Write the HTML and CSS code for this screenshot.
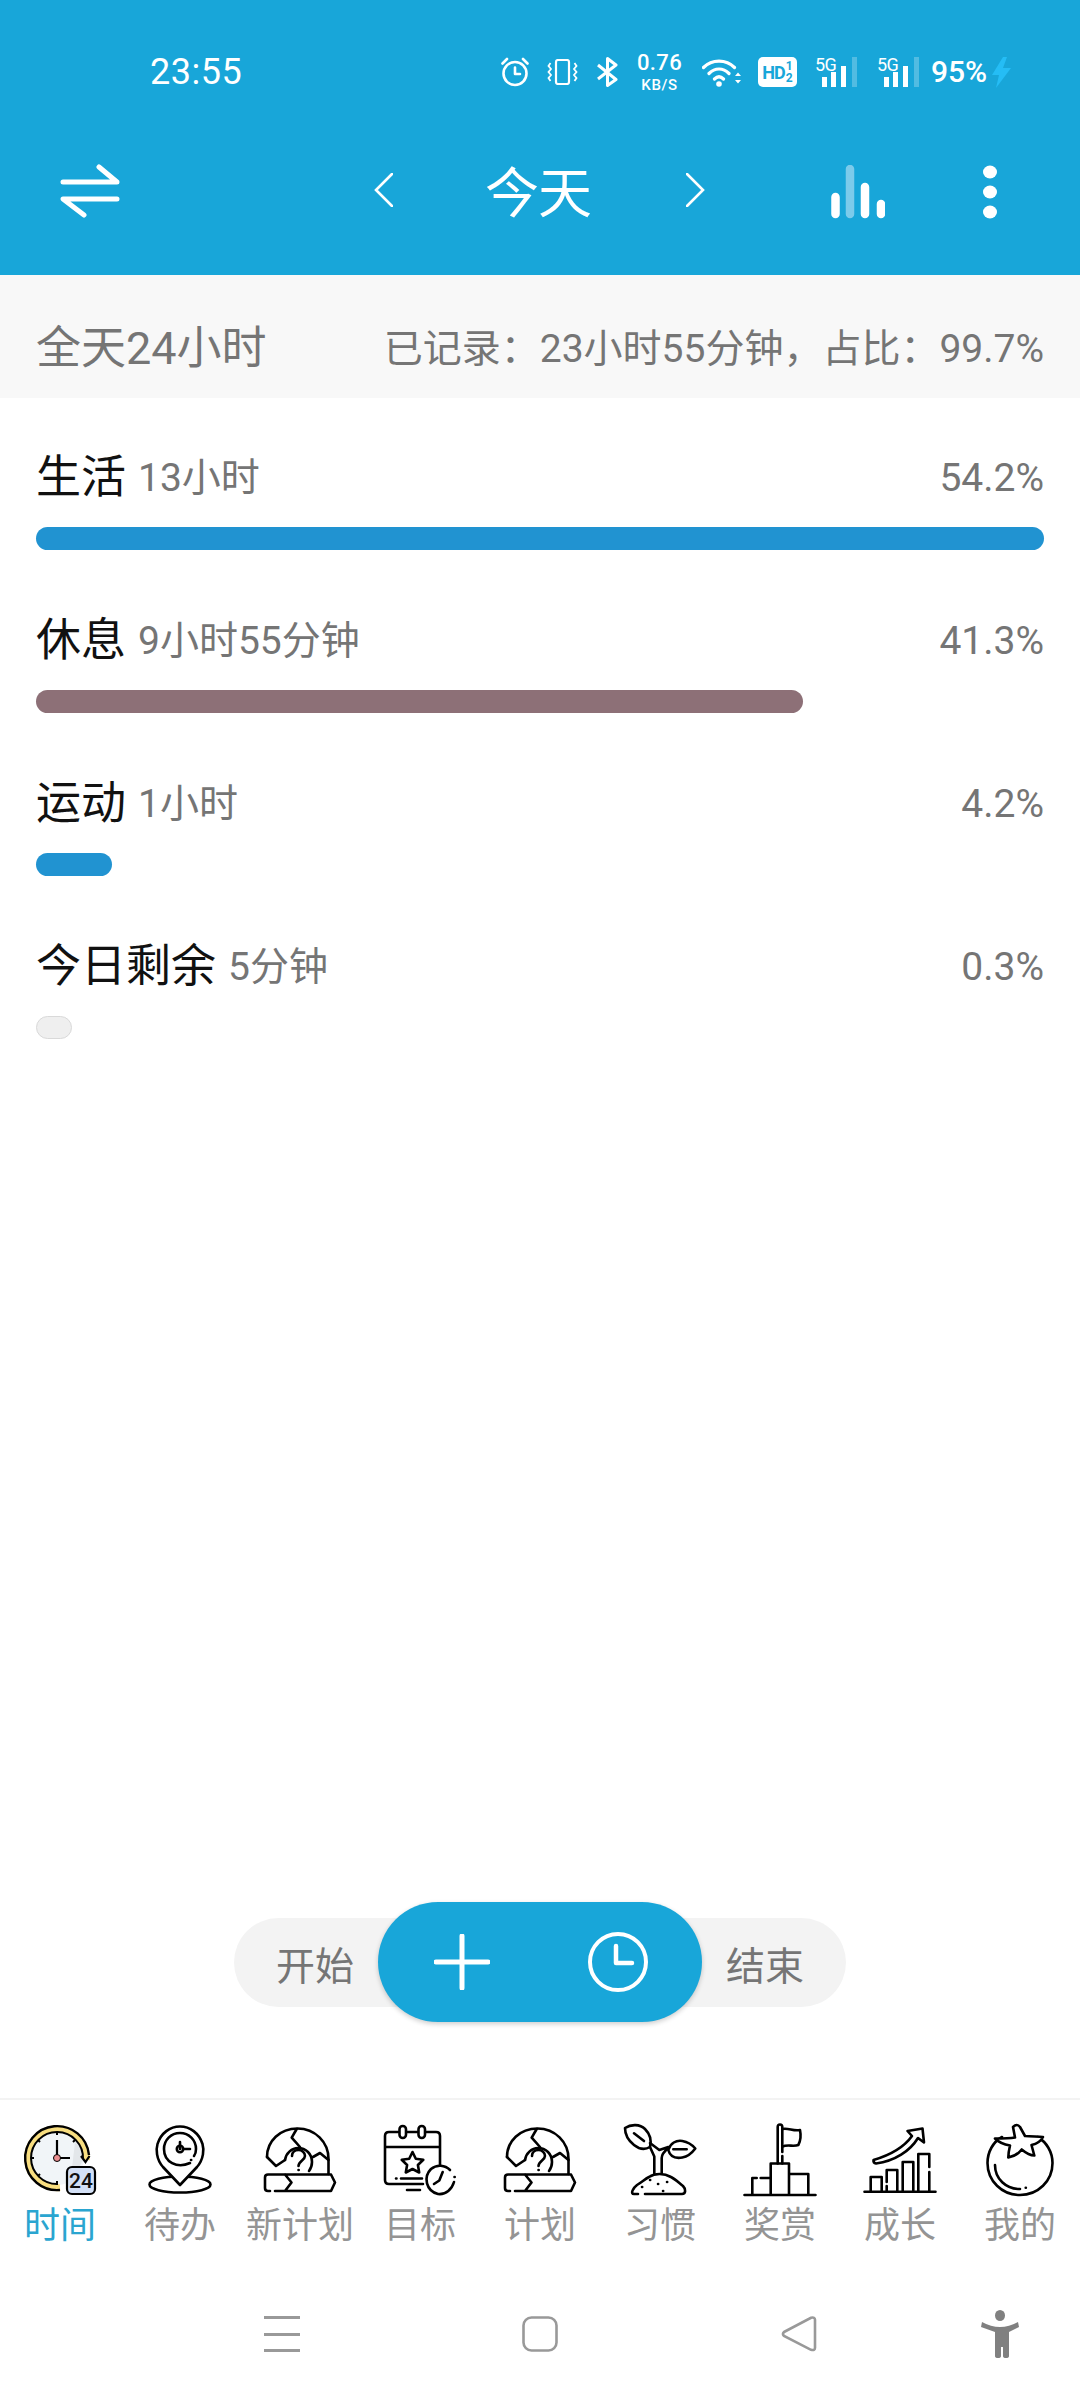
FILE: index.html
```html
<!DOCTYPE html>
<html lang="zh">
<head>
<meta charset="utf-8">
<title>今天</title>
<link rel="stylesheet" href="styles.css">
</head>
<body>
<div class="app">
  <div class="top">
    <div class="status">
      <span class="time">23:55</span>
      <div class="sicons">
        <svg class="i-alarm" viewBox="0 0 28 30" width="28" height="30"><circle cx="14" cy="16.500" r="11.500" fill="none" stroke="#fff" stroke-width="2.600"/><path d="M14 10.500v6.500h5M1.500 6.500L6 2M26.500 6.500L22 2" fill="none" stroke="#fff" stroke-width="2.600" stroke-linecap="round" stroke-linejoin="round"/></svg>
        <svg class="i-vib" viewBox="0 0 31 26" width="31" height="26"><rect x="9" y="1" width="13" height="24" rx="2" fill="none" stroke="#fff" stroke-width="2.200"/><path d="M3.500 4l-2 3 2.500 3-2.500 3 2.500 3-2.500 3 2 3M27.500 4l2 3-2.500 3 2.500 3-2.500 3 2.500 3-2 3" fill="none" stroke="#fff" stroke-width="1.800"/></svg>
        <svg class="i-bt" viewBox="0 0 23 30" width="23" height="30"><path d="M2 8l18 14.500-8.500 6V1.500L20 8 2 22" fill="none" stroke="#fff" stroke-width="3" stroke-linejoin="round"/></svg>
        <div class="speed"><span class="speed-a">0.76</span><span class="speed-b">KB/S</span></div>
        <svg class="i-wifi" viewBox="0 0 40 29" width="40" height="29"><path d="M1.500 9.500C10 1 24 1 32.500 9.500M7 15.500c6-6 14-6 20 0M12.500 21c3-3 6-3 9 0" fill="none" stroke="#fff" stroke-width="3.200" stroke-linecap="round"/><circle cx="17" cy="26" r="2.800" fill="#fff"/><path d="M33 18l3-3.500 3 3.500zM33 22l3 3.500 3-3.500z" fill="#fff"/></svg>
        <div class="hd"><span class="hd-t">HD</span><span class="hd-n"><span>1</span><span>2</span></span></div>
        <div class="sig"><span class="sig-t">5G</span><svg viewBox="0 0 37 30" width="37" height="30"><rect x="0" y="20" width="5" height="10" fill="#fff"/><rect x="9" y="15" width="5" height="15" fill="#fff"/><rect x="19" y="9" width="5" height="21" fill="#fff"/><rect x="30" y="0" width="5" height="30" fill="#fff" opacity=".25"/></svg></div>
        <div class="sig"><span class="sig-t">5G</span><svg viewBox="0 0 37 30" width="37" height="30"><rect x="0" y="20" width="5" height="10" fill="#fff"/><rect x="9" y="15" width="5" height="15" fill="#fff"/><rect x="19" y="9" width="5" height="21" fill="#fff"/><rect x="30" y="0" width="5" height="30" fill="#fff" opacity=".25"/></svg></div>
        <span class="batt">95%</span>
        <svg class="i-bolt" viewBox="0 0 19 31" width="19" height="31"><path d="M11 0L0 18h7l-3 13L19 11h-8l4-11z" fill="#25bdf5"/></svg>
      </div>
    </div>
    <div class="bar">
      <svg class="i-swap" viewBox="0 0 60 54" width="60" height="54"><path d="M3 18h54L39 3M57 35H3l21 16" fill="none" stroke="#fff" stroke-width="5" stroke-linecap="round" stroke-linejoin="round"/></svg>
      <div class="nav-date">
        <svg viewBox="0 0 19 34" width="19" height="34"><path d="M18 1L2 17l16 16" fill="none" stroke="#fff" stroke-width="2.600" stroke-linecap="round"/></svg>
        <span class="today">今天</span>
        <svg viewBox="0 0 19 34" width="19" height="34"><path d="M1 1l16 16L1 33" fill="none" stroke="#fff" stroke-width="2.600" stroke-linecap="round"/></svg>
      </div>
      <svg class="i-chart" viewBox="0 0 54 54" width="54" height="54"><g stroke-width="8.500" stroke-linecap="round"><path d="M4.500 32v17M34 22v27M50 39v10" stroke="#fff"/><path d="M19 4v45" stroke="#7ccbeb"/></g></svg>
      <svg class="i-more" viewBox="0 0 14 54" width="14" height="54"><g fill="#fff"><ellipse cx="7" cy="7" rx="7" ry="6.500"/><ellipse cx="7" cy="27" rx="7" ry="6.500"/><ellipse cx="7" cy="47" rx="7" ry="6.500"/></g></svg>
    </div>
  </div>

  <div class="band">
    <span class="band-l">全天24小时</span>
    <span class="band-r">已记录：23小时55分钟，占比：99.7%</span>
  </div>

  <div class="rows">
    <div class="row">
      <div class="row-h"><span class="name">生活</span><span class="dur">13小时</span><span class="pct">54.2%</span></div>
      <div class="fill blue w-full"></div>
    </div>
    <div class="row">
      <div class="row-h"><span class="name">休息</span><span class="dur">9小时55分钟</span><span class="pct">41.3%</span></div>
      <div class="fill mauve w-rest"></div>
    </div>
    <div class="row">
      <div class="row-h"><span class="name">运动</span><span class="dur">1小时</span><span class="pct">4.2%</span></div>
      <div class="fill blue w-sport"></div>
    </div>
    <div class="row">
      <div class="row-h"><span class="name">今日剩余</span><span class="dur">5分钟</span><span class="pct">0.3%</span></div>
      <div class="fill grey w-left"></div>
    </div>
  </div>

  <div class="fab-wrap">
    <div class="fab-track">
      <span class="fab-txt fab-a">开始</span>
      <div class="fab">
        <svg viewBox="0 0 56 56" width="56" height="56"><path d="M28 2v52M2 28h52" fill="none" stroke="#fff" stroke-width="5" stroke-linecap="round"/></svg>
        <svg viewBox="0 0 60 60" width="60" height="60"><circle cx="30" cy="30" r="28" fill="none" stroke="#fff" stroke-width="4"/><path d="M28 14v17h16" fill="none" stroke="#fff" stroke-width="4.500" stroke-linecap="round" stroke-linejoin="round"/></svg>
      </div>
      <span class="fab-txt fab-b">结束</span>
    </div>
  </div>

  <nav class="tabs">
    <div class="tab on">
      <svg viewBox="0 0 80 76" width="80" height="76">
        <circle cx="37" cy="36" r="27" fill="#f1f5f8"/>
        <path d="M55 20a27 27 0 0 1 9 16l-6 12-6-2z" fill="#e3e7ea"/>
        <path d="M66.500 38A29.500 29.500 0 1 0 40 65.500" fill="none" stroke="#f8de80" stroke-width="7"/>
        <path d="M69 33A32 32 0 1 0 40 68" fill="none" stroke="#000" stroke-width="2.400"/>
        <path d="M63 37A26 26 0 1 0 38 62" fill="none" stroke="#000" stroke-width="2"/>
        <path d="M37 10v3M37 59v3M11 36h3M18 18l2 2M18 54l2-2M55 18l-2 2" stroke="#000" stroke-width="2"/>
        <path d="M37 18v18h13" fill="none" stroke="#000" stroke-width="2.200"/>
        <circle cx="37" cy="36" r="3.500" fill="#ea8d8f" stroke="#000" stroke-width="1"/>
        <path d="M61 34l4.500 6 4-6" fill="none" stroke="#000" stroke-width="2.200"/>
        <rect x="47" y="45" width="28" height="27" rx="5" fill="#d3e0f6" stroke="#000" stroke-width="2.200"/>
        <text x="61" y="65.500" class="badge-t">24</text>
      </svg>
      <span>时间</span>
    </div>
    <div class="tab">
      <svg viewBox="0 0 80 76" width="80" height="76" class="line">
        <ellipse cx="40" cy="62.500" rx="30.500" ry="8"/>
        <path d="M40 63L23 45C16 37 16 27 17.500 22 21 11 30 4.500 40 4.500S59 11 62.500 22C64 27 64 37 57 45z" fill="#fff"/>
        <path d="M50 41C37 47 24 40 24 27 24 18 31 11 40 11c9 0 16 7 16 16 0 3-.5 5-2 7"/>
        <path d="M51 38h.2"/>
        <path d="M40 20v7M43 27h7"/>
        <circle cx="40" cy="27" r="3.200"/>
      </svg>
      <span>待办</span>
    </div>
    <div class="tab">
      <svg viewBox="0 0 80 76" width="80" height="76" class="line">
        <use href="#globe"/>
      </svg>
      <span>新计划</span>
    </div>
    <div class="tab">
      <svg viewBox="0 0 80 76" width="80" height="76" class="line">
        <path d="M60 43V14q0-4-4-4H9q-4 0-4 4v44q0 4 4 4h34M5 25h55M27 68h13M16 56.500h.5M21 56.500h21"/>
        <rect x="19.500" y="4" width="6.500" height="12" rx="3.200" fill="#fff"/>
        <rect x="38.500" y="4" width="6.500" height="12" rx="3.200" fill="#fff"/>
        <path d="M32.500 30l3.300 6.800 7.500 1-5.400 5.200 1.300 7.500-6.700-3.500-6.700 3.500 1.300-7.500-5.400-5.200 7.500-1z"/>
        <path d="M70 48C65 43 57 42 51 47 43 55 46 69 58 72 66 73 72 67 74 60"/>
        <path d="M74.500 55h.2"/>
        <path d="M62.700 50l-3.400 8.500-5.300 3.500"/>
      </svg>
      <span>目标</span>
    </div>
    <div class="tab">
      <svg viewBox="0 0 80 76" width="80" height="76" class="line">
        <use href="#globe"/>
      </svg>
      <span>计划</span>
    </div>
    <div class="tab">
      <svg viewBox="0 0 80 76" width="80" height="76" class="line">
        <path d="M5 6C11 2 20 2 25 7c4 4 7 10 5 18-5 3-11 2-16-2C9 19 5 13 5 6zM14 11.300l10 7.700"/>
        <path d="M48.300 28c2-7 8-10 14-9 6 1 10 4 13 7.500-3 4-7 8-13 9-6 1-12 0-14-7.500zM53.300 27.300h13.400"/>
        <path d="M30 25l4.300 9.500v17M41.700 51.500V36c0-3 3-7 6.600-10M30 21l9.300 7 9-3"/>
        <path d="M25 72H62c4 0 4-5 1-8-5-4-8-7-12-9-7-4-16-4-22 0-4 2-7 5-12 8-4 3-7 9-3 9h4"/>
        <path d="M30 58h.2M38 62h.2M22 65h.2M43 69h.2M47 60h.2"/>
      </svg>
      <span>习惯</span>
    </div>
    <div class="tab">
      <svg viewBox="0 0 80 76" width="80" height="76" class="line">
        <path d="M4.500 73h71M30.700 73V41.500H49V73M49 52h19.300v21M12.300 73V56h4.400M20.700 56h10"/>
        <path d="M37.700 41.500V5q0-2.500 2.300-2.500T42.300 5v25M42.300 34v7.500"/>
        <path d="M42.300 7c6-1.500 11 2.500 17.700 1 1 5 .5 11-1.700 15-5 2-11-1-16 1.700"/>
      </svg>
      <span>奖赏</span>
    </div>
    <div class="tab">
      <svg viewBox="0 0 80 76" width="80" height="76" class="line">
        <path d="M4.500 69.700h71M10.700 69.700V55h11v14.700M26.700 60V48h10.600v21.700M26.700 64v5.700M42.700 69.700V40h10.600v29.700M58.300 69.700V32h11v13M69.300 50v19.700"/>
        <path d="M13.500 38C27 34 42 28 52 14L47.500 9 62.500 6.500 64 20.500 58 16C50 29 35 39 16 41.500Q13 41 13.500 38z"/>
      </svg>
      <span>成长</span>
    </div>
    <div class="tab">
      <svg viewBox="0 0 80 76" width="80" height="76" class="line">
        <path d="M22 15C13 20 7.500 30 7.500 41c0 18 14.500 32 32.500 32s32.500-14 32.500-32c0-11-6-21-15-26"/>
        <path d="M15 43c0 14 11 24 25 24M45.700 65.700h.2"/>
        <path d="M33 5q4-4 7 0l5 9c6 0 13 1 18 1-2 4-7 7-11.500 8l2.800 10.500c-5 0-9-3-12.600-6-3 4-8 7-13.400 8 0-5 1-9 1.700-12-6-1-12-4-15-7 6 0 14 0 20-1z" fill="#fff"/>
      </svg>
      <span>我的</span>
    </div>
  </nav>

  <div class="sysnav">
    <div class="burger"><i></i><i></i><i></i></div>
    <svg class="sys-home" viewBox="0 0 37 36" width="37" height="36"><rect x="1.500" y="1.500" width="33" height="33" rx="8" fill="none" stroke="#999" stroke-width="2.600"/></svg>
    <svg class="sys-back" viewBox="0 0 37 36" width="37" height="36"><path d="M3 16L30 1.800q4-1 4 2v28q0 3-4 2L3 20q-2-2 0-4z" fill="none" stroke="#999" stroke-width="2.600"/></svg>
    <svg class="sys-person" viewBox="0 0 38 48" width="38" height="48"><ellipse cx="19" cy="5.500" rx="5" ry="5.500" fill="#808080"/><path d="M1 12q9 5 18 5t18-5l1 5-10 5v24q0 2-3 2t-3-2V37h-2v9q0 2-3 2t-3-2V22L0 17z" fill="#808080"/></svg>
  </div>
</div>

<svg class="defs" width="0" height="0" aria-hidden="true">
  <symbol id="globe" viewBox="0 0 80 76">
    <path d="M7 35C7 19 20 6.500 37.500 6.500S68.500 20 68.500 37V52"/>
    <path d="M7 35l9 9 9-6M36.700 7l-5 8.700L40 25"/>
    <path d="M25 38C26 31 32 26 38 26c8 0 14 6 14 14 0 4-1.500 7-3 9"/>
    <path d="M53 35l7-4 8.500 7"/>
    <path d="M32 34c0-4 3-6 6.500-6s6.500 2.500 6.500 6c0 4-6.500 5-6.500 10M38.500 48h.2"/>
    <path d="M71 52.500H8q-3 0-3 3V66q0 3 3 3h2M15 69H71L75 60.500 71 52.500M25 52.500L31.500 60.500 25 69"/>
  </symbol>
</svg>
</body>
</html>
```

FILE: styles.css
```css
* { box-sizing: border-box; margin: 0; padding: 0; }
html, body { width: 1080px; height: 2400px; background: #fff; overflow: hidden; }
body { font-family: "Roboto", "Noto Sans CJK SC", sans-serif; color: #757575; }
.app { width: 1080px; height: 2400px; display: flex; flex-direction: column; }
.defs { display: block; }

.top { height: 275px; background: #18a6d9; color: #fff; flex: none; }
.status { height: 90px; padding: 50px 69px 0 150px; display: flex; justify-content: space-between; align-items: flex-start; }
.time { font-size: 36px; line-height: 44px; letter-spacing: .5px; }
.sicons { display: flex; align-items: center; height: 44px; }
.i-vib { margin-left: 18px; }
.i-bt { margin-left: 18px; }
.speed { margin-left: 18px; width: 45px; display: flex; flex-direction: column; align-items: center; font-weight: 500; white-space: nowrap; }
.speed-a { font-size: 22px; line-height: 26px; letter-spacing: .4px; }
.speed-b { font-size: 15px; line-height: 18px; letter-spacing: .6px; }
.i-wifi { margin-left: 20px; }
.hd { margin-left: 16px; width: 39px; height: 30px; background: #fff; border-radius: 5px; display: flex; align-items: center; justify-content: center; color: #18a6d9; font-weight: 700; }
.hd-t { font-size: 18px; letter-spacing: -1px; }
.hd-n { display: flex; flex-direction: column; font-size: 12px; line-height: 12px; margin-left: 1px; }
.sig { position: relative; width: 44px; height: 30px; margin-left: 18px; display: flex; justify-content: flex-end; align-items: flex-end; }
.sig-t { position: absolute; left: 0; top: -1px; font-size: 18px; line-height: 18px; letter-spacing: -.5px; }
.batt { font-size: 30px; line-height: 30px; margin-left: 10px; font-weight: 500; width: 55px; white-space: nowrap; }
.i-bolt { margin-left: 6px; }

.bar { height: 185px; padding: 0 0 0 60px; display: flex; align-items: flex-start; }
.i-swap { margin-top: 74px; }
.nav-date { display: flex; align-items: center; margin: 73px 0 0 254px; height: 54px; }
.nav-date .today { font-size: 54px; line-height: 54px; width: 103px; margin: 0 95px; text-align: center; letter-spacing: -1px; text-indent: -3px; font-family: "Noto Sans CJK SC", sans-serif; font-weight: 400; white-space: nowrap; }
.i-chart { margin: 75px 0 0 126px; }
.i-more { margin: 75px 0 0 98px; }

.band { height: 123px; flex: none; background: #f8f8f8; padding: 24px 36px 0; display: flex; justify-content: space-between; align-items: center; }
.band-l { font-size: 45px; line-height: 56px; }
.band-r { font-size: 39px; line-height: 56px; }

.rows { flex: none; display: flex; flex-direction: column; }
.row { height: 163px; padding: 52px 36px 0; }
.row-h { display: flex; align-items: center; height: 56px; line-height: 56px; }
.name { font-size: 45px; color: #111; margin-right: 12px; }
.dur { font-size: 39px; }
.pct { font-size: 39px; margin-left: auto; }
.fill { height: 23px; border-radius: 12px; margin-top: 21px; }
.blue { background: #2193d1; }
.mauve { background: #8d7077; }
.grey { background: #efefef; border: 1px solid #d9d9d9; }
.w-full { width: 1008px; }
.w-rest { width: 767px; }
.w-sport { width: 76px; }
.w-left { width: 36px; }

.fab-wrap { flex: 1; display: flex; justify-content: center; align-items: flex-end; padding-bottom: 91px; }
.fab-track { width: 612px; height: 89px; background: #f3f3f3; border-radius: 45px; display: flex; align-items: center; justify-content: space-between; }
.fab-txt { font-size: 39px; width: 144px; text-align: center; flex: none; }
.fab-a { padding-left: 18px; }
.fab-b { padding-right: 18px; }
.fab { width: 324px; height: 120px; flex: none; margin-bottom: 2px; background: #18a6d9; border-radius: 60px; box-shadow: 0 2px 5px rgba(0,0,0,.2); display: flex; align-items: center; justify-content: space-between; padding: 0 54px 0 56px; }

.tabs { flex: none; height: 172px; border-top: 2px solid #f3f3f3; display: grid; grid-template-columns: repeat(9, 120px); padding-top: 22px; }
.tab { display: flex; flex-direction: column; align-items: center; font-size: 36px; line-height: 48px; color: #949494; white-space: nowrap; }
.tab span { margin-top: 4px; }
.tab svg { display: block; flex: none; }
.tab.on { color: #2aa5d0; }
.line { fill: none; stroke: #000; stroke-width: 2.600; stroke-linecap: round; stroke-linejoin: round; }
.badge-t { font-family: "Roboto", sans-serif; font-size: 21px; font-weight: 500; text-anchor: middle; fill: #111; }

.sysnav { flex: none; height: 130px; display: flex; align-items: flex-start; padding: 46px 0 0 264px; }
.burger { width: 36px; height: 36px; display: flex; flex-direction: column; justify-content: space-between; }
.burger i { display: block; height: 3px; background: #999; }
.sys-home { margin-left: 222px; }
.sys-back { margin-left: 222px; }
.sys-person { margin: -6px 0 0 163px; }
```
